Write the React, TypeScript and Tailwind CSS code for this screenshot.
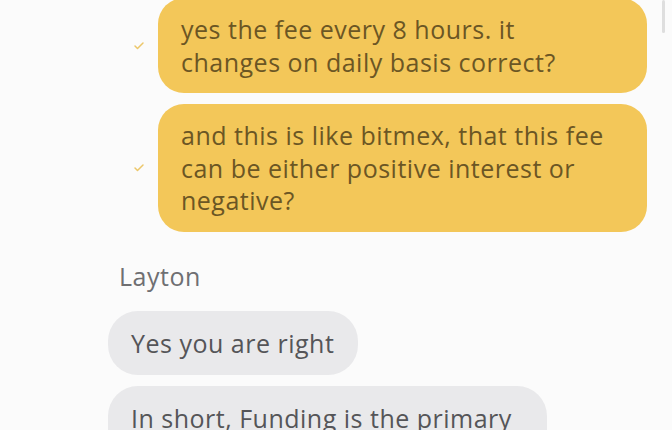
import { Check } from "lucide-react";

type Msg = { id: number; text: string };

const sent: Msg[] = [
  { id: 1, text: "yes the fee every 8 hours. it changes on daily basis correct?" },
  {
    id: 2,
    text: "and this is like bitmex, that this fee can be either positive interest or negative?",
  },
];

const received: Msg[] = [
  { id: 3, text: "Yes you are right" },
  { id: 4, text: "In short, Funding is the primary mechanism" },
];

const font = { fontFamily: '"Open Sans", "Noto Sans", sans-serif' };

const SentBubble = ({ text }: { text: string }) => (
  <div className="flex items-center justify-end gap-[13px]">
    <Check size={12} strokeWidth={3} className="text-[#ecc76a]" />
    <div className="w-[489px] rounded-[26px] bg-[#f3c759] py-[15px] pr-[30px] pl-[23px] text-[25px] leading-[32.5px] tracking-[0.5px] text-[#6b5624]">
      {text}
    </div>
  </div>
);

const ReceivedBubble = ({ text }: { text: string }) => (
  <div className="flex">
    <div className="max-w-[439px] rounded-[30px] bg-[#e9e9eb] py-[16px] pr-[24px] pl-[23px] text-[25px] leading-[32px] tracking-[0.5px] text-[#555558]">
      {text}
    </div>
  </div>
);

export default function App() {
  return (
    <div
      className="relative h-[430px] w-[672px] overflow-hidden bg-[#fbfbfb]"
      style={font}
    >
      <div className="flex flex-col">
        <div className="mt-[-2px] mr-[25px] flex flex-col gap-[11px]">
          {sent.map((m) => (
            <SentBubble key={m.id} text={m.text} />
          ))}
        </div>

        <div className="mt-[28px] ml-[108px] flex flex-col">
          <div className="ml-[11px] text-[25px] leading-[32px] tracking-[0.5px] text-[#6f6f72]">
            Layton
          </div>
          <div className="mt-[19px] flex flex-col gap-[11px]">
            {received.map((m) => (
              <ReceivedBubble key={m.id} text={m.text} />
            ))}
          </div>
        </div>
      </div>

      {/* scrollbar thumb */}
      <div className="absolute top-0 right-[7px] h-[33px] w-[3px] rounded-full bg-[#dedede]" />
    </div>
  );
}
